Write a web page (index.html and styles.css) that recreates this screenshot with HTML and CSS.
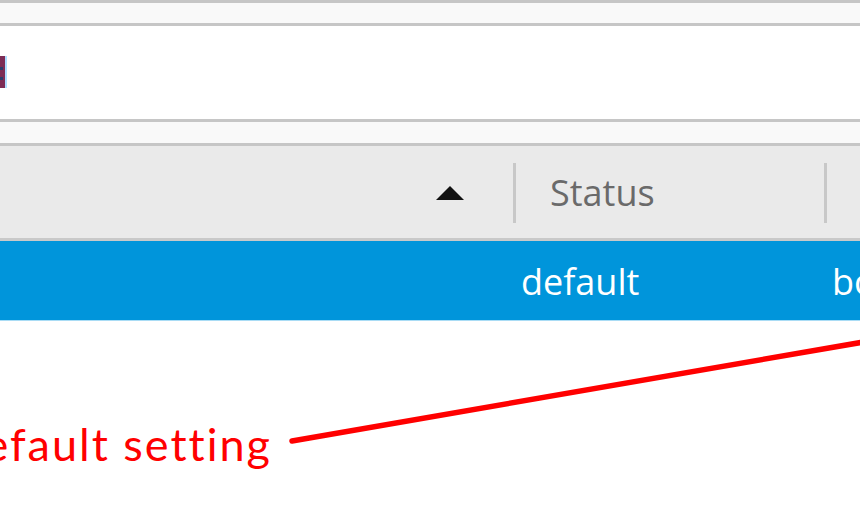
FILE: index.html
```html
<!DOCTYPE html>
<html>
<head>
<meta charset="utf-8">
<link rel="stylesheet" href="styles.css">
</head>
<body>
<div class="page">
  <div class="rule"></div>
  <div class="band top-band"></div>
  <div class="rule"></div>
  <div class="panel">
    <div class="tile"><span class="dot"></span><span class="dot"></span></div>
  </div>
  <div class="rule"></div>
  <div class="band mid-band"></div>
  <div class="rule"></div>
  <div class="header">
    <div class="col name-col">
      <svg class="sort" width="30" height="16" viewBox="0 0 30 16"><polygon points="15,1 29,15 1,15" fill="#111"/></svg>
    </div>
    <div class="sep"></div>
    <div class="col status-col"><span class="htext">Status</span></div>
    <div class="sep"></div>
    <div class="col rest-col"></div>
  </div>
  <div class="header-rule"></div>
  <div class="row selected">
    <div class="cell name-cell"></div>
    <div class="cell status-cell">default</div>
    <div class="cell rest-cell">bo</div>
  </div>
  <div class="below"></div>

  <span class="note">Default setting</span>
  <svg class="pointer" width="860" height="520" viewBox="0 0 860 520">
    <line x1="292" y1="441" x2="875" y2="340" stroke="#ff0000" stroke-width="5.5" stroke-linecap="round"/>
  </svg>
</div>
</body>
</html>
```
FILE: styles.css
```css
html, body {
  margin: 0;
  padding: 0;
  background: #ffffff;
  overflow: hidden;
}
.page {
  width: 860px;
  height: 520px;
  position: relative;
  overflow: hidden;
  display: flex;
  flex-direction: column;
  font-family: "Open Sans", "Noto Sans", sans-serif;
}
.rule {
  height: 3px;
  background: #c6c6c6;
  flex: none;
}
.band {
  background: #f9f9f9;
  flex: none;
}
.top-band { height: 20px; }
.mid-band { height: 21px; }
.panel {
  height: 93px;
  background: #ffffff;
  flex: none;
  display: flex;
  align-items: flex-start;
  padding-top: 30px;
  box-sizing: border-box;
}
.tile {
  width: 5px;
  height: 30px;
  background: #7d2c55;
  border-right: 2px solid #aedcff;
  display: flex;
  flex-direction: column;
  justify-content: center;
  gap: 7px;
  padding-top: 2px;
  box-sizing: content-box;
}
.dot {
  display: block;
  width: 3px;
  height: 3px;
  background: #2d3b6b;
}
.header {
  height: 92px;
  background: #eaeaea;
  display: flex;
  align-items: center;
  flex: none;
}
.col {
  height: 100%;
  display: flex;
  align-items: center;
}
.name-col {
  width: 513px;
  justify-content: flex-end;
  padding-right: 48px;
  box-sizing: border-box;
}
.sort {
  display: block;
  margin-top: 2px;
}
.sep {
  width: 3px;
  height: 60px;
  background: #c8c8c8;
  flex: none;
  margin-top: 2px;
}
.status-col {
  width: 308px;
  padding-left: 34px;
  box-sizing: border-box;
}
.htext {
  font-size: 36px;
  color: #6a6a6a;
  line-height: 1;
  margin-top: 2px;
}
.rest-col { flex: 1; }
.header-rule {
  height: 3px;
  background: #c9c9c9;
  flex: none;
}
.row {
  height: 79px;
  display: flex;
  align-items: center;
  flex: none;
}
.selected {
  background: #0095db;
  color: #ffffff;
  border-bottom: 1px solid #a9dcf5;
}
.cell {
  font-size: 36px;
  line-height: 1;
}
.name-cell { width: 521px; flex: none; }
.status-cell { width: 311px; flex: none; padding-top: 3px; }
.rest-cell { flex: 1; padding-top: 3px; }
.below { flex: 1; background: #fff; }

.note {
  position: absolute;
  right: 588px;
  top: 417px;
  font-family: Lato, "Open Sans", sans-serif;
  font-size: 45px;
  letter-spacing: 2px;
  color: #ff0000;
  white-space: nowrap;
  line-height: 1.2;
}
.pointer {
  position: absolute;
  left: 0;
  top: 0;
}
```
